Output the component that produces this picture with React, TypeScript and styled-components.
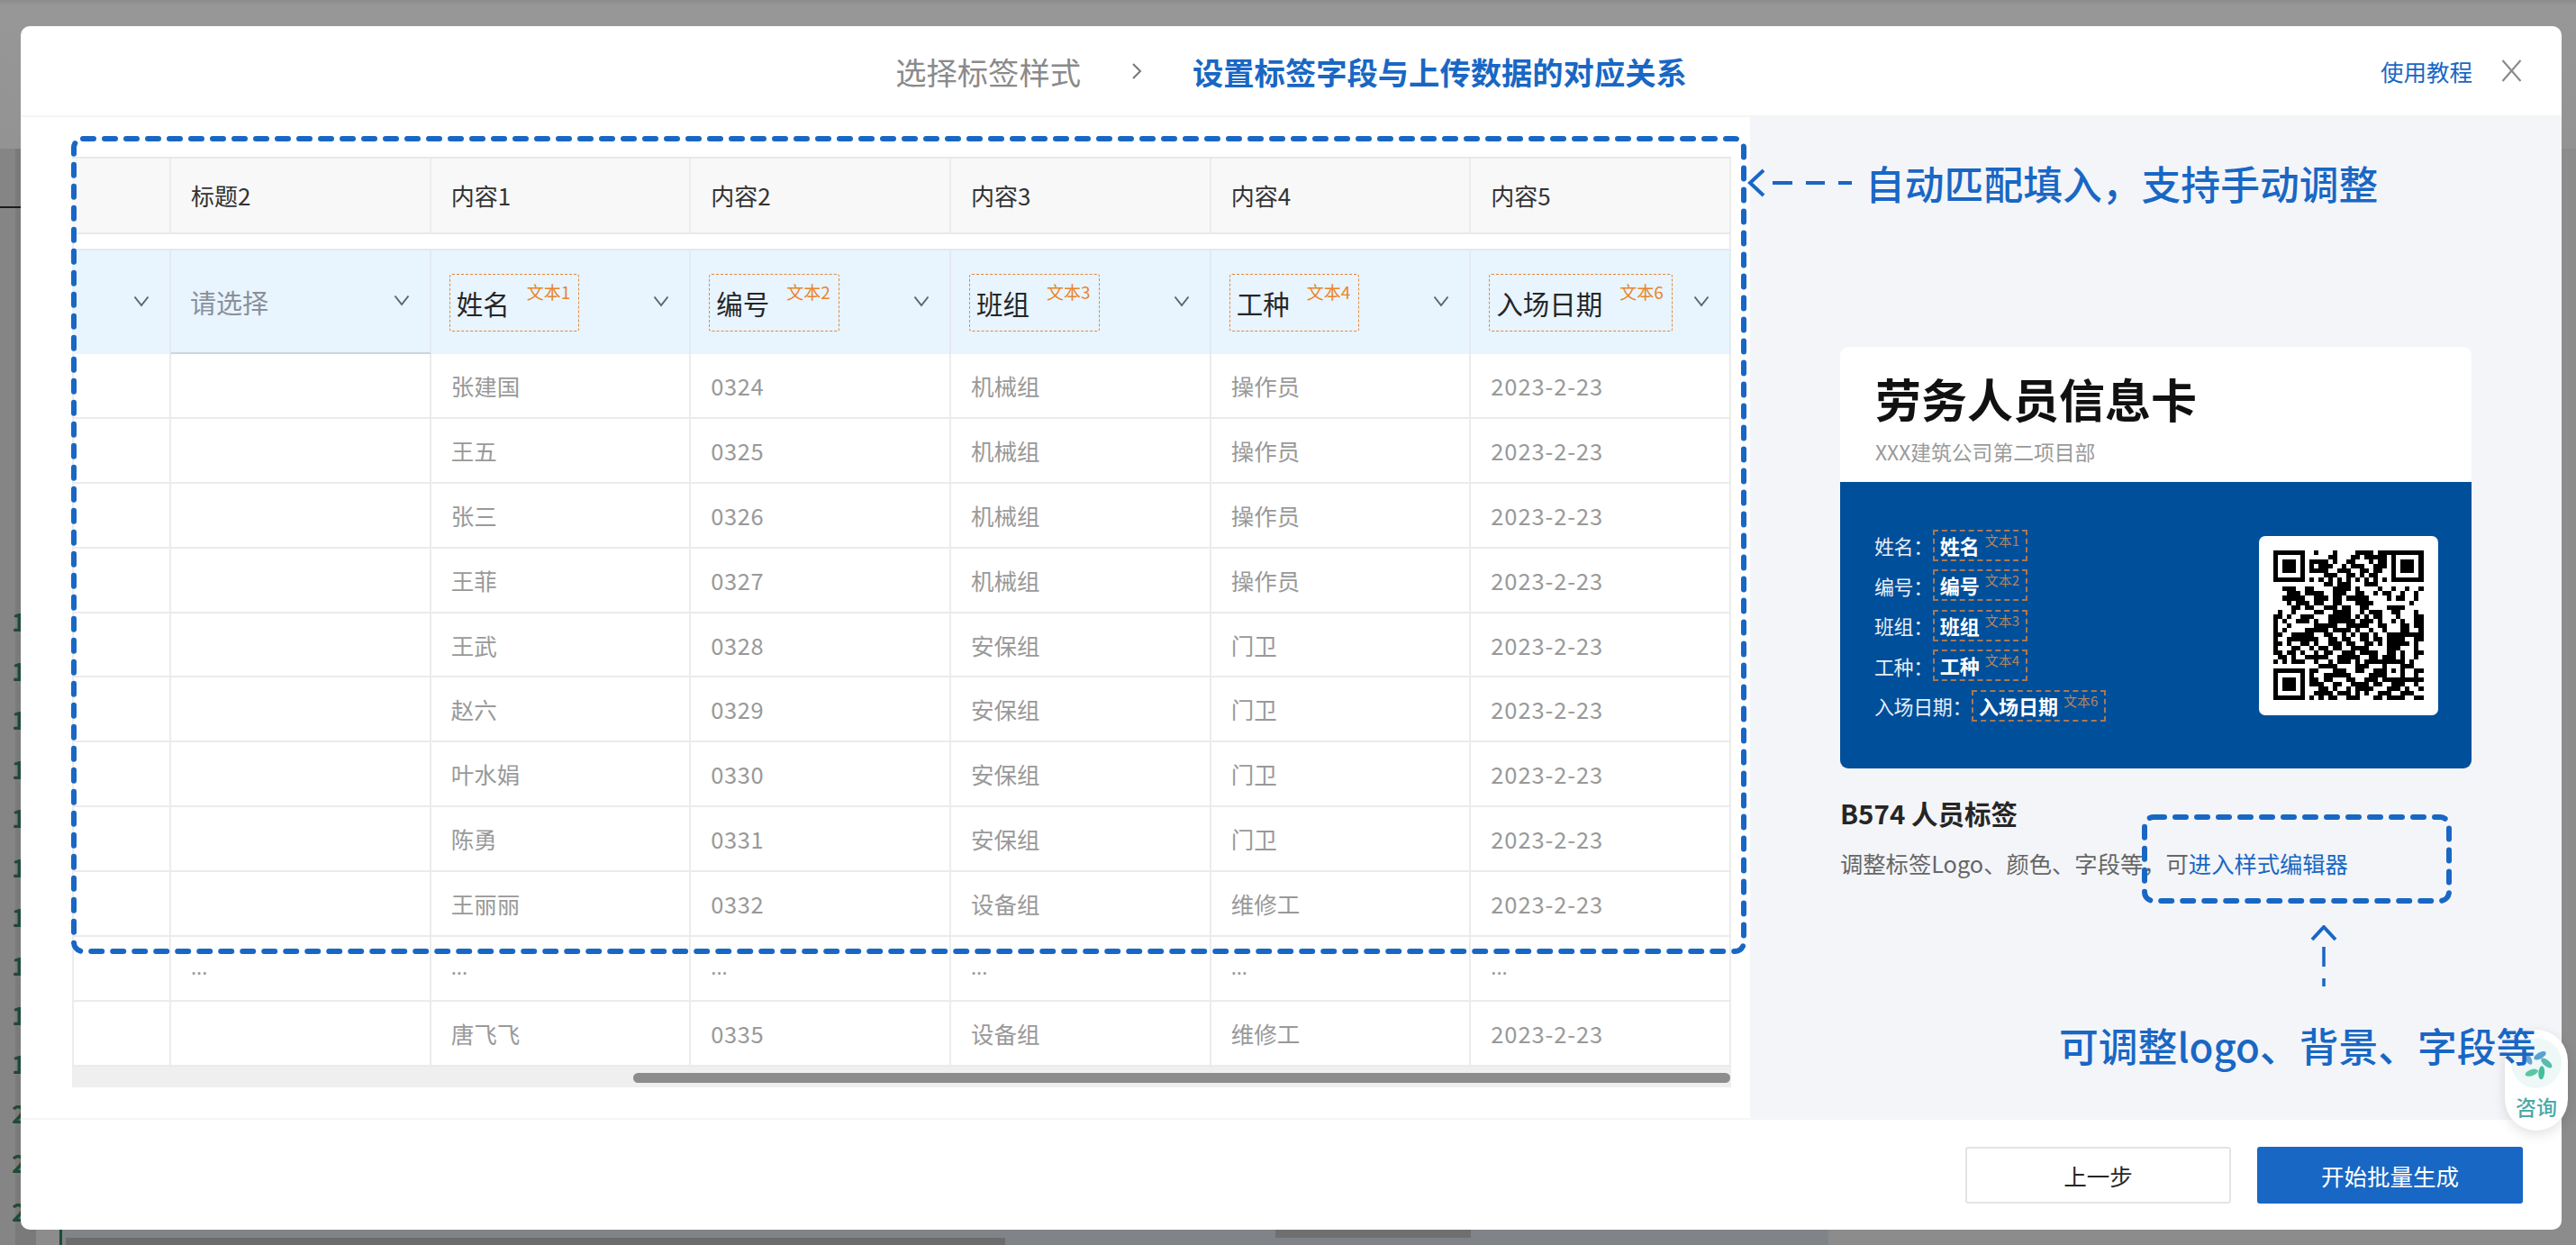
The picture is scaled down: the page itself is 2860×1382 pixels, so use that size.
import React from "react";
import styled, { createGlobalStyle } from "styled-components";

const BLUE = "#1967c4";
const GRID = "110px repeat(6, 288.67px)";

const GlobalStyle = createGlobalStyle`
  html, body {
    margin: 0;
    padding: 0;
    background: #8c8c8c;
  }
  * {
    box-sizing: border-box;
  }
  body {
    font-family: "Noto Sans CJK SC", "Noto Sans", sans-serif;
  }
`;

const Page = styled.div`
  position: relative;
  width: 2860px;
  height: 1382px;
  overflow: hidden;
  padding: 29px 16px 17px 23px;
  display: flex;
  background: #8c8c8c;
`;

/* everything below the dimmed mask, only slivers show around the modal */
const Backdrop = styled.div`
  position: absolute;
  inset: 0;
`;

const TopBand = styled.div`
  position: absolute;
  left: 0;
  top: 0;
  width: 100%;
  height: 165px;
  background: linear-gradient(180deg, #8b8b8b 0, #979797 6px, #939393 100%);
`;

const LeftStrip = styled.div`
  position: absolute;
  left: 0;
  top: 165px;
  width: 40px;
  height: 1217px;
  background: linear-gradient(90deg, #858585 0, #858585 17px, #7a7a7a 17px);
`;

const BlackLine = styled.div`
  position: absolute;
  left: 0;
  top: 229px;
  width: 40px;
  height: 2px;
  background: #1c1c1c;
`;

const RowNumbers = styled.div`
  position: absolute;
  left: 13px;
  top: 663px;
  font-size: 27px;
  font-weight: 700;
  line-height: 54.6px;
  color: #1d4a3a;
`;

const BottomCells = styled.div`
  position: absolute;
  left: 66px;
  top: 1365px;
  width: 1964px;
  height: 17px;
  background: #808488;
  border-left: 3px solid #1d4a3a;
`;

const BottomBar = styled.div`
  position: absolute;
  left: 73px;
  top: 1374px;
  width: 1043px;
  height: 8px;
  background: #6c6c6c;
`;

const BottomActive = styled.div`
  position: absolute;
  left: 1416px;
  top: 1365px;
  width: 217px;
  height: 9px;
  background: #6f6f6f;
`;

const Modal = styled.div`
  position: relative;
  flex: 1;
  min-width: 0;
  display: flex;
  flex-direction: column;
  background: #fff;
  border-radius: 10px;
`;

const Header = styled.div`
  height: 101px;
  flex: none;
  display: grid;
  grid-template-columns: 1fr auto 1fr;
  align-items: center;
  padding: 0 44px;
  border-bottom: 2px solid #f5f5f5;
`;

const Steps = styled.div`
  grid-column: 2;
  display: flex;
  align-items: center;
  gap: 56px;
`;

const Step = styled.span<{ $active?: boolean }>`
  font-size: 34.3px;
  line-height: 48px;
  font-weight: ${(p) => (p.$active ? 700 : 400)};
  color: ${(p) => (p.$active ? BLUE : "#8a8a8a")};
`;

const HeaderActions = styled.div`
  display: flex;
  align-items: center;
  justify-content: flex-end;
  gap: 32px;
`;

const TutorialLink = styled.a`
  font-size: 25.5px;
  line-height: 36px;
  color: ${BLUE};
`;

const Body = styled.div`
  flex: 1;
  display: flex;
  min-height: 0;
`;

const TablePane = styled.div`
  position: relative;
  width: 1920px;
  flex: none;
  padding: 44px 0 0 57px;
`;

const Frame = styled.svg<{ $x: number; $y: number }>`
  position: absolute;
  left: ${(p) => p.$x}px;
  top: ${(p) => p.$y}px;
  pointer-events: none;
`;

const Table = styled.div`
  width: 1842px;
  border-left: 2px solid #ececec;
  border-right: 2px solid #ececec;
`;

const Row = styled.div`
  display: grid;
  grid-template-columns: ${GRID};
  margin: 0 -2px;
`;

const HeadRow = styled(Row)`
  height: 86px;
  background: #f8f8f9;
  border-top: 2px solid #e8e8e8;
  border-bottom: 2px solid #e8e8e8;
`;

const SelectRow = styled(Row)`
  height: 117px;
  margin-top: 16px;
  background: #e8f4fe;
  border-top: 2px solid #e3e9ee;
`;

const DataRow = styled(Row)`
  height: 71.9px;
  border-bottom: 2px solid #ebebeb;
`;

const Cell = styled.div`
  display: flex;
  align-items: center;
  padding-left: 22px;
  border-right: 2px solid #ececec;
  font-size: 25.5px;
  line-height: 36px;
  white-space: nowrap;
`;

const HeadCell = styled(Cell)`
  color: #333;
  font-size: 26px;
`;

const DataCell = styled(Cell)<{ $spacing?: number }>`
  color: #999;
  letter-spacing: ${(p) => p.$spacing ?? 0}px;
`;

const EllipsisCell = styled(DataCell)`
  font-size: 22px;
  padding-bottom: 6px;
`;

const SelectCell = styled(Cell)<{ $empty?: boolean }>`
  position: relative;
  padding: 0 22px 0 20px;
  justify-content: space-between;
  border-right-color: #e3eaf0;
  border-bottom: ${(p) => (p.$empty ? "2px solid #ccd5e0" : "0")};
`;

const Placeholder = styled.span`
  font-size: 29px;
  line-height: 40px;
  color: #8b8f9a;
  margin-left: 1px;
`;

const FieldTag = styled.div`
  height: 64px;
  display: flex;
  gap: 19px;
  padding: 0 9px 0 7px;
  border: 1.5px dashed #e08a3c;
  border-radius: 3px;
`;

const FieldName = styled.span`
  font-size: 29.5px;
  line-height: 62px;
  color: #262626;
`;

const FieldLabel = styled.span`
  font-size: 19px;
  line-height: 26px;
  margin-top: 6px;
  color: #e8852a;
`;

const Arrow = styled.svg`
  flex: none;
  display: block;
`;

const Caret = styled(Arrow)`
  margin-top: -2px;
`;

const ScrollTrack = styled.div`
  width: 1842px;
  height: 23px;
  padding: 7px 0 0 623px;
  background: #efefef;
`;

const ScrollThumb = styled.div`
  width: 1218px;
  height: 11px;
  border-radius: 6px;
  background: #8c8c8c;
`;

const SidePane = styled.div`
  position: relative;
  width: 901px;
  flex: none;
  display: flex;
  flex-direction: column;
  padding: 47px 100px 0;
  background: #f4f5f9;
`;

const HintRow = styled.div`
  display: flex;
  align-items: center;
  gap: 15px;
  margin-left: -103px;
  height: 52px;
`;

const HintText = styled.span`
  font-size: 43.8px;
  line-height: 52px;
  font-weight: 500;
  color: ${BLUE};
  white-space: nowrap;
`;

const Card = styled.div`
  margin-top: 156px;
  height: 468px;
  flex: none;
  display: flex;
  flex-direction: column;
  border-radius: 9px;
  overflow: hidden;
`;

const CardTop = styled.div`
  height: 150px;
  flex: none;
  padding: 25px 0 0 39px;
  background: #fff;
`;

const CardTitle = styled.div`
  font-size: 51px;
  line-height: 64px;
  font-weight: 700;
  color: #111;
`;

const CardSub = styled.div`
  margin-top: 13px;
  font-size: 22.8px;
  line-height: 30px;
  color: #9a9a9a;
`;

const CardBottom = styled.div`
  flex: 1;
  display: flex;
  align-items: center;
  justify-content: space-between;
  padding: 0 37px 0 38px;
  background: #004f9a;
`;

const CardFields = styled.div`
  display: flex;
  flex-direction: column;
  gap: 9.5px;
`;

const CardField = styled.div`
  display: flex;
  align-items: center;
  height: 35px;
  font-size: 22px;
  color: #e6eef7;
  letter-spacing: -0.4px;
`;

const CardTag = styled.div`
  height: 35px;
  display: flex;
  gap: 6px;
  padding: 0 7px 0 6px;
  border: 2px dashed #a87a55;
  letter-spacing: 0;
`;

const CardTagName = styled.span`
  font-size: 22px;
  line-height: 30px;
  font-weight: 700;
  color: #fff;
`;

const CardTagLabel = styled.span`
  font-size: 15px;
  line-height: 20px;
  color: #b5845f;
`;

const QrBox = styled.div`
  width: 199px;
  height: 199px;
  flex: none;
  display: flex;
  align-items: center;
  justify-content: center;
  border-radius: 7px;
  background: #fff;
`;

const InfoTitle = styled.div`
  margin-top: 29px;
  font-size: 29.5px;
  line-height: 40px;
  font-weight: 700;
  color: #262626;
`;

const InfoText = styled.div`
  margin-top: 18px;
  font-size: 25.3px;
  line-height: 36px;
  color: #666;
  white-space: nowrap;
`;

const InfoLink = styled.a`
  color: ${BLUE};
`;

const UpArrow = styled(Arrow)`
  margin: 51px 0 0 522px;
`;

const FloatingHint = styled(HintText)`
  position: relative;
  z-index: 5;
  display: block;
  margin: 39px 0 0 243px;
`;

const Footer = styled.div`
  height: 124px;
  flex: none;
  display: flex;
  justify-content: flex-end;
  gap: 29px;
  padding: 30px 43px 0 0;
  border-top: 2px solid #f5f5f5;
`;

const Button = styled.button<{ $primary?: boolean }>`
  width: 295px;
  height: 63px;
  font-family: inherit;
  font-size: 25.5px;
  border-radius: 3px;
  border: ${(p) => (p.$primary ? "0" : "2px solid #e4e4e4")};
  background: ${(p) => (p.$primary ? BLUE : "#fff")};
  color: ${(p) => (p.$primary ? "#fff" : "#262626")};
`;

const Bubble = styled.div`
  position: absolute;
  left: 2781px;
  top: 1143px;
  z-index: 3;
  width: 70px;
  height: 112px;
  display: flex;
  flex-direction: column;
  align-items: center;
  padding-top: 9px;
  border-radius: 35px;
  background: #fff;
  box-shadow: 0 4px 14px rgba(0, 0, 0, 0.12);
`;

const BubbleText = styled.span`
  margin-top: 5px;
  font-size: 23px;
  line-height: 30px;
  font-weight: 500;
  color: #4ba9a8;
`;

const QR_ROWS = [
  "000000000100010000111101110000000",
  "000000000000110001101111100000000",
  "000000001111010011000101100000000",
  "000000001011100101110011100000000",
  "000000001111001110011011000000000",
  "000000000001110011010110000000000",
  "000000001010101010101010100000000",
  "000000000001101110001110000000000",
  "001110011000011110100001001001001",
  "000111011110011100110010110010010",
  "001111100111011011111000010110010",
  "000101110110011000111100000000100",
  "000011011001110110011000011110000",
  "010010000110011110010111001100010",
  "110100111000111110101011000100011",
  "101001110100111111011101001010011",
  "100100000111110011111001100011011",
  "101000011111011110100100100011001",
  "110011111001100101011010011111111",
  "100111111100110110011011011110011",
  "110100110100111011001101011111010",
  "100011001011011001111000011100010",
  "110110100101100111011110011010011",
  "011010011111001111100110111010010",
  "101011100100101110101111101110100",
  "000000000011110000111000111111100",
  "000000001100011100110011000010011",
  "000000001001111110000111000110010",
  "000000001101100011001110000011111",
  "000000001110011001111011001110010",
  "000000000011010010111100011101001",
  "000000000111101110101001110011100",
  "000000001010110011100011011110011",
];

function Finder({ x, y }: { x: number; y: number }) {
  return (
    <>
      <rect x={x} y={y} width="7" height="7" fill="#000" />
      <rect x={x + 1} y={y + 1} width="5" height="5" fill="#fff" />
      <rect x={x + 2} y={y + 2} width="3" height="3" fill="#000" />
    </>
  );
}

function QrCode() {
  return (
    <Arrow width="166.5" height="166.5" viewBox="0 0 33 33" shapeRendering="crispEdges">
      {QR_ROWS.map((row, y) =>
        row.split("").map((bit, x) =>
          bit === "1" ? <rect key={`${x}-${y}`} x={x} y={y} width="1" height="1" fill="#000" /> : null
        )
      )}
      <Finder x={0} y={0} />
      <Finder x={26} y={0} />
      <Finder x={0} y={26} />
      <rect x="24" y="24" width="5" height="5" fill="#000" />
      <rect x="25" y="25" width="3" height="3" fill="#fff" />
      <rect x="26" y="26" width="1" height="1" fill="#000" />
    </Arrow>
  );
}

function CaretIcon() {
  return (
    <Caret width="18" height="13" viewBox="0 0 18 13" fill="none">
      <path d="M1.5 1.5 L9 11 L16.5 1.5" stroke="#5c6470" strokeWidth="2" />
    </Caret>
  );
}

function DashedFrame({ x, y, w, h }: { x: number; y: number; w: number; h: number }) {
  return (
    <Frame $x={x} $y={y} width={w + 8} height={h + 8} fill="none">
      <rect
        x="4"
        y="4"
        width={w}
        height={h}
        rx="10"
        stroke={BLUE}
        strokeWidth="6"
        strokeLinecap="round"
        strokeDasharray="12 12"
      />
    </Frame>
  );
}

function LeafIcon() {
  const leaves = [
    { x: 32, y: 19.7, angle: -30, color: "#5ba0d2" },
    { x: 39.3, y: 28, angle: 40, color: "#58bcae" },
    { x: 33.7, y: 38.7, angle: 95, color: "#44bf9d" },
    { x: 22.7, y: 38.7, angle: -20, color: "#5cc6a4" },
    { x: 18.7, y: 23, angle: 60, color: "#6aa5d4" },
  ];
  return (
    <Arrow width="56" height="56" viewBox="0 0 56 56">
      <circle cx="28" cy="28" r="28" fill="#eef8f6" />
      {leaves.map((leaf) => (
        <ellipse
          key={leaf.color}
          cx={leaf.x}
          cy={leaf.y}
          rx="7.5"
          ry="3.4"
          fill={leaf.color}
          transform={`rotate(${leaf.angle} ${leaf.x} ${leaf.y})`}
        />
      ))}
    </Arrow>
  );
}

const HEADERS = ["", "标题2", "内容1", "内容2", "内容3", "内容4", "内容5"];

const FIELDS = [
  { name: "姓名", label: "文本1" },
  { name: "编号", label: "文本2" },
  { name: "班组", label: "文本3" },
  { name: "工种", label: "文本4" },
  { name: "入场日期", label: "文本6" },
];

const ROWS = [
  ["张建国", "0324", "机械组", "操作员", "2023-2-23"],
  ["王五", "0325", "机械组", "操作员", "2023-2-23"],
  ["张三", "0326", "机械组", "操作员", "2023-2-23"],
  ["王菲", "0327", "机械组", "操作员", "2023-2-23"],
  ["王武", "0328", "安保组", "门卫", "2023-2-23"],
  ["赵六", "0329", "安保组", "门卫", "2023-2-23"],
  ["叶水娟", "0330", "安保组", "门卫", "2023-2-23"],
  ["陈勇", "0331", "安保组", "门卫", "2023-2-23"],
  ["王丽丽", "0332", "设备组", "维修工", "2023-2-23"],
  ["唐飞飞", "0335", "设备组", "维修工", "2023-2-23"],
];

const GUTTER = "1111111111222".split("");

function spacingFor(value: string) {
  if (!/^\d/.test(value)) return 0;
  return value.length > 4 ? 0.9 : 0.6;
}

function PersonRow({ values }: { values: string[] }) {
  return (
    <DataRow>
      <DataCell />
      <DataCell />
      {values.map((v, i) => (
        <DataCell key={i} $spacing={spacingFor(v)}>
          {v}
        </DataCell>
      ))}
    </DataRow>
  );
}

export default function App() {
  return (
    <Page>
      <GlobalStyle />
      <Backdrop>
        <TopBand />
        <LeftStrip />
        <BlackLine />
        <RowNumbers>
          {GUTTER.map((n, i) => (
            <div key={i}>{n}</div>
          ))}
        </RowNumbers>
        <BottomCells />
        <BottomBar />
        <BottomActive />
      </Backdrop>

      <Modal>
        <Header>
          <Steps>
            <Step>选择标签样式</Step>
            <Arrow width="12" height="20" viewBox="0 0 12 20" fill="none">
              <path d="M2 2 L10 10 L2 18" stroke="#777" strokeWidth="2" />
            </Arrow>
            <Step $active>设置标签字段与上传数据的对应关系</Step>
          </Steps>
          <HeaderActions>
            <TutorialLink>使用教程</TutorialLink>
            <Arrow width="23" height="25" viewBox="0 0 23 25" fill="none">
              <path d="M1.5 1 L21.5 24 M21.5 1 L1.5 24" stroke="#8a8a8a" strokeWidth="2.2" />
            </Arrow>
          </HeaderActions>
        </Header>

        <Body>
          <TablePane>
            <Table>
              <HeadRow>
                {HEADERS.map((h, i) => (
                  <HeadCell key={i}>{h}</HeadCell>
                ))}
              </HeadRow>
              <SelectRow>
                <SelectCell>
                  <span />
                  <CaretIcon />
                </SelectCell>
                <SelectCell $empty>
                  <Placeholder>请选择</Placeholder>
                  <CaretIcon />
                </SelectCell>
                {FIELDS.map((f) => (
                  <SelectCell key={f.name}>
                    <FieldTag>
                      <FieldName>{f.name}</FieldName>
                      <FieldLabel>{f.label}</FieldLabel>
                    </FieldTag>
                    <CaretIcon />
                  </SelectCell>
                ))}
              </SelectRow>
              {ROWS.slice(0, 9).map((r) => (
                <PersonRow key={r[1]} values={r} />
              ))}
              <DataRow>
                <DataCell />
                {[0, 1, 2, 3, 4, 5].map((i) => (
                  <EllipsisCell key={i}>...</EllipsisCell>
                ))}
              </DataRow>
              <PersonRow values={ROWS[9]} />
            </Table>
            <ScrollTrack>
              <ScrollThumb />
            </ScrollTrack>
            <DashedFrame x={55} y={20} w={1854} h={902} />
          </TablePane>

          <SidePane>
            <HintRow>
              <Arrow width="116" height="32" viewBox="0 0 116 32" fill="none">
                <path d="M18 2 L3 16 L18 30" stroke={BLUE} strokeWidth="4" />
                <path d="M3 16 H116" stroke={BLUE} strokeWidth="4" strokeDasharray="0 25 22 15 21 15 15 3" />
              </Arrow>
              <HintText>自动匹配填入，支持手动调整</HintText>
            </HintRow>

            <Card>
              <CardTop>
                <CardTitle>劳务人员信息卡</CardTitle>
                <CardSub>XXX建筑公司第二项目部</CardSub>
              </CardTop>
              <CardBottom>
                <CardFields>
                  {FIELDS.map((f) => (
                    <CardField key={f.name}>
                      {f.name}：
                      <CardTag>
                        <CardTagName>{f.name}</CardTagName>
                        <CardTagLabel>{f.label}</CardTagLabel>
                      </CardTag>
                    </CardField>
                  ))}
                </CardFields>
                <QrBox>
                  <QrCode />
                </QrBox>
              </CardBottom>
            </Card>

            <InfoTitle>B574 人员标签</InfoTitle>
            <InfoText>
              调整标签Logo、颜色、字段等，可<InfoLink>进入样式编辑器</InfoLink>
            </InfoText>

            <UpArrow width="30" height="68" viewBox="0 0 30 68" fill="none">
              <path d="M2 16 L15 2 L28 16" stroke={BLUE} strokeWidth="4" />
              <path d="M15 2 V68" stroke={BLUE} strokeWidth="3.5" strokeDasharray="0 22 22 13 12" />
            </UpArrow>
            <FloatingHint>可调整logo、背景、字段等</FloatingHint>

            <DashedFrame x={434} y={773} w={338} h={93} />
          </SidePane>
        </Body>

        <Footer>
          <Button>上一步</Button>
          <Button $primary>开始批量生成</Button>
        </Footer>
      </Modal>

      <Bubble>
        <LeafIcon />
        <BubbleText>咨询</BubbleText>
      </Bubble>
    </Page>
  );
}
